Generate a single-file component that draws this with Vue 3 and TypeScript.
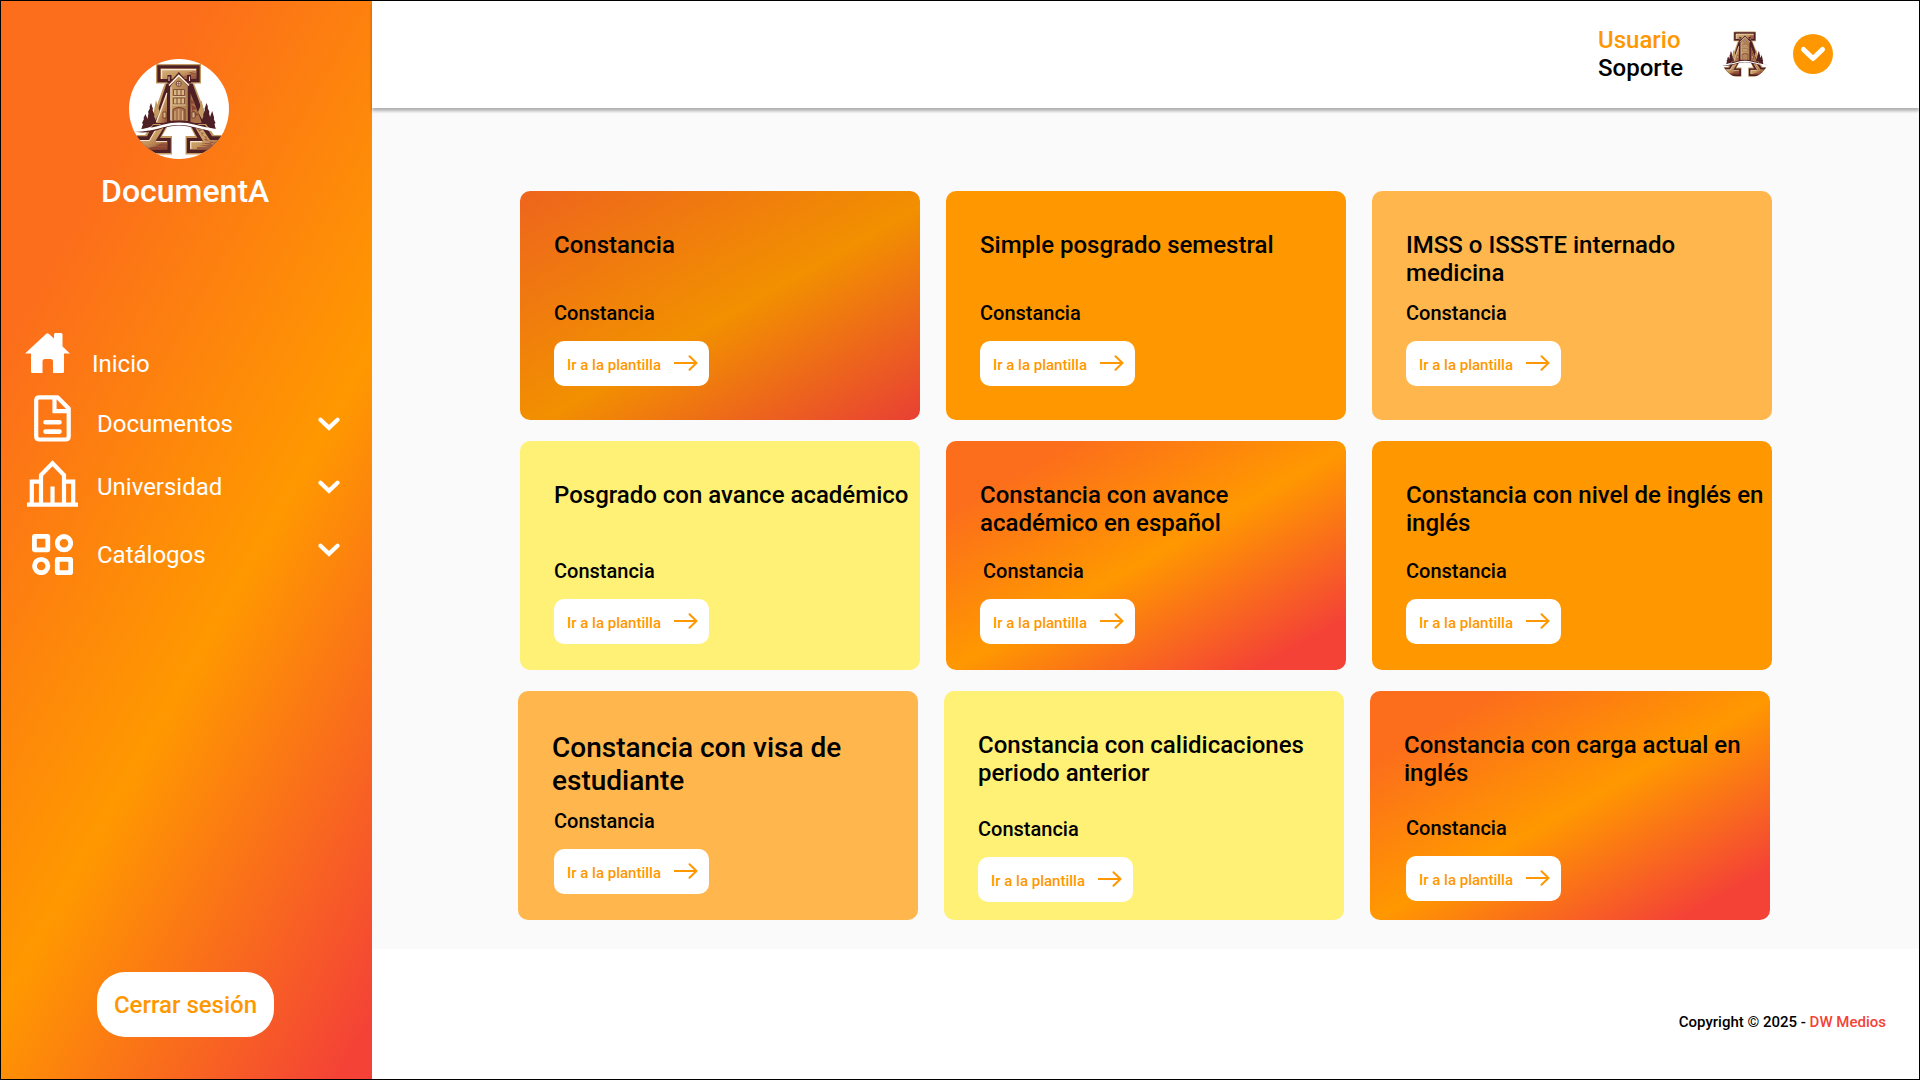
<script setup lang="ts">
interface NavItem {
  key: string
  label: string
  expandable: boolean
}

interface Template {
  title: string
  kind: string
  tone: string
  layout?: string
}

const navItems: NavItem[] = [
  { key: 'home', label: 'Inicio', expandable: false },
  { key: 'docs', label: 'Documentos', expandable: true },
  { key: 'campus', label: 'Universidad', expandable: true },
  { key: 'catalog', label: 'Catálogos', expandable: true },
]

const rows: Template[][] = [
  [
    { title: 'Constancia', kind: 'Constancia', tone: 'sunset-dim' },
    { title: 'Simple posgrado semestral', kind: 'Constancia', tone: 'orange' },
    { title: 'IMSS o ISSSTE internado\nmedicina', kind: 'Constancia', tone: 'peach' },
  ],
  [
    { title: 'Posgrado con avance académico', kind: 'Constancia', tone: 'yellow' },
    { title: 'Constancia con avance\nacadémico en español', kind: 'Constancia', tone: 'sunset', layout: 'kind-indent' },
    { title: 'Constancia con nivel de inglés en\ninglés', kind: 'Constancia', tone: 'orange' },
  ],
  [
    { title: 'Constancia con visa de\nestudiante', kind: 'Constancia', tone: 'peach', layout: 'large-title' },
    { title: 'Constancia con calidicaciones\nperiodo anterior', kind: 'Constancia', tone: 'yellow', layout: 'low' },
    { title: 'Constancia con carga actual en\ninglés', kind: 'Constancia', tone: 'sunset', layout: 'low-indent' },
  ],
]
</script>

<template>
  <div class="app">
    <svg class="defs" width="0" height="0" aria-hidden="true">
      <defs>
        <linearGradient id="bronze" x1="0" y1="0" x2="1" y2="1">
          <stop offset="0" stop-color="#dcb682" />
          <stop offset="0.55" stop-color="#c4965e" />
          <stop offset="1" stop-color="#8c4632" />
        </linearGradient>
        <linearGradient id="wall" x1="0" y1="0" x2="1" y2="0">
          <stop offset="0" stop-color="#c79c62" />
          <stop offset="1" stop-color="#b08050" />
        </linearGradient>
        <clipPath id="round"><circle cx="50" cy="50" r="50" /></clipPath>
        <symbol id="emblem" viewBox="0 0 100 100">
          <g clip-path="url(#round)">
            <!-- legs of the letter -->
            <path d="M36 24.500H65L81 66H21L34 29Z" fill="#c39a62" />
            <path d="M38 23H63L78.500 66H24Z" fill="#4e1f24" />
            <path d="M38 34V64H27Z" fill="url(#bronze)" />
            <path d="M61.500 34V64H73Z" fill="#a8714a" />
            <path d="M61.500 40L66 44 62 45 68 50 63 51 70 56 64 57" fill="#8c4632" />
            <path d="M38 34L27.500 63" stroke="#f7e6cd" stroke-width="1.400" />
            <path d="M34 53h3v6h-3zM63 53h3v6h-3z" fill="#d8b581" stroke="#6b3528" stroke-width=".8" />
            <!-- top serif -->
            <path d="M27 5H72V24.500H27Z" fill="#c39a62" />
            <path d="M28.300 6.300H70.700V23.200H28.300Z" fill="#4e1f24" />
            <path d="M31.500 9.500H67.500V20H31.500Z" fill="url(#bronze)" />
            <path d="M32.600 20V10.600H67" fill="none" stroke="#f7e6cd" stroke-width="1.200" />
            <path d="M67 12L58 14H67V15.500L55 17H67V19H52" fill="#9c5a40" />
            <!-- house -->
            <path d="M38.500 16H42.500V24H38.500ZM58 16H62V24H58Z" fill="#4e1f24" />
            <path d="M40 17.500V22M60.500 17.500V22" stroke="#f4e0c2" stroke-width="1" />
            <path d="M49.800 13L61 26V63H38.500V26Z" fill="#4e1f24" />
            <path d="M49.800 17.200L58.800 27V62H41.500V27Z" fill="url(#wall)" />
            <path d="M40 26.500L49.800 16.500L60 26.500" fill="none" stroke="#fff1dc" stroke-width="1.600" />
            <path d="M41.900 28V61" stroke="#f7e6cd" stroke-width="1" />
            <circle cx="49.700" cy="24.800" r="2.600" fill="#f4e0c2" stroke="#6b3528" stroke-width=".9" />
            <path d="M49.700 22.200V27.400M47.100 24.800H52.300" stroke="#6b3528" stroke-width=".7" />
            <path d="M44.500 30.500H55.500V36.500H44.500ZM44.500 39H55.500V45H44.500Z" fill="#d8b581" stroke="#7d4934" stroke-width=".9" />
            <path d="M48 30.500V36.500M52 30.500V36.500M48 39V45M52 39V45" stroke="#7d4934" stroke-width="1" />
            <path d="M43.500 37.600H56.500M43.500 46H56.500" stroke="#e6cfae" stroke-width=".9" />
            <path d="M44 62V50.500Q50 46.500 56 50.500V62Z" fill="#ab7550" stroke="#6b3528" stroke-width=".9" />
            <path d="M46 61V52M49.800 61V50M53.500 61V52" stroke="#dcb98c" stroke-width=".9" />
            <!-- trees -->
            <path d="M27 41L29 48L31 53L26 62H23Z M72.500 41L71 48L69 53L74 62H77Z" fill="#c39a62" />
            <path d="M22 44L24 50L23.500 51L25.500 56L25 57L27 62V66L12 71L14 65L13 64L15 60L14.500 59L16.500 55L18.500 60L19.500 54L19 53L21 49L20.500 48Z" fill="#4e1f24" />
            <path d="M77.500 44L75.500 50L76 51L74 56L74.500 57L72.500 62V66L87 71L85.500 65L86.500 64L84.800 60L85.200 59L83.200 52L81 58L80 54L80.500 53L78.600 49L79 48Z" fill="#4e1f24" />
            <!-- foot serifs -->
            <path d="M2 76H16L24 65H40L33 77H43V95.500H2Z" fill="#c39a62" />
            <path d="M2 77.300H18L24 66H38L31 79H41.800V94H2Z" fill="#4e1f24" />
            <path d="M4 81H20L27 69H34.500L26.500 82H38.500V90.500H10Z" fill="url(#bronze)" />
            <path d="M8 81.500H20.500L27 70.500M27 82.600H38" fill="none" stroke="#f7e6cd" stroke-width="1" />
            <path d="M38 84L26 85.500H38V87L22 88H38V90.500H14" fill="#8c4632" />
            <path d="M98 76H85L77 65H60L66 77H56.500V95.500H98Z" fill="#c39a62" />
            <path d="M98 77.300H83L76 66H61.500L68.500 79H57.800V94H98Z" fill="#4e1f24" />
            <path d="M96 81H81L73 69H66.500L74 82H61V90.500H90Z" fill="url(#bronze)" />
            <path d="M61.800 90V82.600H73" fill="none" stroke="#f7e6cd" stroke-width="1.100" />
            <path d="M68 70L73 71L70 73L75 74L72 76L78 78L75 81L88 84H72L82 86H70L80 88H68V90.500H88" fill="#9c5a40" />
            <!-- bridge -->
            <path d="M2 72Q26 70 34 64Q50 59.500 66 64Q76 70 98 72Q76 71.500 66 69Q50 64 34 69Q18 76 2 72Z" fill="#4e1f24" />
            <path d="M4 71.800Q22 71 34 67Q50 62.600 66 67Q80 71 97 72.500" fill="none" stroke="#fff" stroke-width="2.400" />
          </g>
        </symbol>
      </defs>
    </svg>

    <aside class="sidebar">
      <div class="brand">
        <div class="brand-logo"><svg width="100" height="100"><use href="#emblem" /></svg></div>
        <h1 class="brand-name">DocumentA</h1>
      </div>

      <nav class="nav">
        <a v-for="item in navItems" :key="item.key" class="nav-item" :class="item.key">
          <span class="nav-icon">
            <svg v-if="item.key === 'home'" width="45" height="40" viewBox="0 0 45 40" fill="#fff">
              <path d="M0 20.500 21 1Q22.500-.4 24 1L29 5.500V1.500Q29 0 30.500 0H36Q37.500 0 37.500 1.500V13.500L45 20.500H39V38.500Q39 40 37.500 40H28V28.500Q28 26 25.500 26H20Q17.500 26 17.500 28.500V40H7.500Q6 40 6 38.500V20.500Z" />
            </svg>
            <svg v-else-if="item.key === 'docs'" width="37" height="47" viewBox="0 0 37 47" fill="none" stroke="#fff" stroke-width="4.200">
              <path d="M5.500 2.300H23.500L34.700 13.500V41.200Q34.700 44.500 31.400 44.500H5.500Q2.200 44.500 2.200 41.200V5.600Q2.200 2.300 5.500 2.300Z" stroke-linejoin="round" />
              <path d="M20.500 3V16.200H34" />
              <path d="M11.500 27.300H25.500M11.500 36.600H25.500" stroke-width="4.600" stroke-linecap="round" />
            </svg>
            <svg v-else-if="item.key === 'campus'" width="51" height="47" viewBox="0 0 51 47" fill="none" stroke="#fff" stroke-width="4.200">
              <path d="M0 44.600H51M4.800 44V21.600H14M46.200 44V21.600H37M14 44V15L25.500 3.300 37 15V44M25.500 44V26.500" />
            </svg>
            <svg v-else width="41" height="41" viewBox="0 0 41 41" fill="none" stroke="#fff" stroke-width="4.800">
              <rect x="2.400" y="2.400" width="13.400" height="13.400" rx=".6" stroke-linejoin="round" />
              <circle cx="32" cy="9.200" r="6.700" />
              <circle cx="9.200" cy="32" r="6.700" />
              <rect x="25.300" y="25.300" width="13.400" height="13.400" rx=".6" stroke-linejoin="round" />
            </svg>
          </span>
          <span class="nav-label">{{ item.label }}</span>
          <svg v-if="item.expandable" class="nav-chevron" width="22" height="14" viewBox="0 0 22 14">
            <path d="M2.500 2.800 11 10.800 19.500 2.800" fill="none" stroke="#fff" stroke-width="4.200" stroke-linecap="round" />
          </svg>
        </a>
      </nav>

      <button class="logout" type="button">Cerrar sesión</button>
    </aside>

    <div class="main">
      <header class="topbar">
        <div class="user">
          <span class="user-name">Usuario</span>
          <span class="user-role">Soporte</span>
        </div>
        <svg class="avatar" width="50" height="50"><use href="#emblem" /></svg>
        <svg class="user-menu" width="40" height="40" viewBox="0 0 40 40">
          <circle cx="20" cy="20" r="20" fill="#ff9800" />
          <path d="M10.500 15.500 20 24.500 29.500 15.500" fill="none" stroke="#fff" stroke-width="5" stroke-linecap="round" stroke-linejoin="round" />
        </svg>
      </header>

      <main class="content">
        <div v-for="(row, i) in rows" :key="i" class="row" :class="`row-${i + 1}`">
          <article v-for="card in row" :key="card.title" class="card" :class="[card.tone, card.layout]">
            <h2 class="card-title">{{ card.title }}</h2>
            <p class="card-kind">{{ card.kind }}</p>
            <button class="card-link" type="button">
              <span>Ir a la plantilla</span>
              <svg width="25" height="16" viewBox="0 0 25 16" fill="none" stroke="#ff9800" stroke-width="2">
                <path d="M1 8H23" />
                <path d="M16.500 1.300 23.500 8 16.500 14.700" stroke-linecap="round" stroke-linejoin="round" />
              </svg>
            </button>
          </article>
        </div>
      </main>

      <footer class="footer">Copyright © 2025 -&nbsp;<span class="company">DW Medios</span></footer>
    </div>
  </div>
</template>

<style>
body {
  margin: 0;
}
</style>

<style scoped>
.app {
  display: flex;
  box-sizing: border-box;
  width: 1920px;
  height: 1080px;
  overflow: hidden;
  border: 1px solid #000;
  background: #fff;
  color: #000;
  font-family: Roboto, "Liberation Sans", sans-serif;
  font-weight: 500;
}

.defs {
  position: absolute;
}

h1,
h2,
p {
  margin: 0;
  font-weight: 500;
}

button {
  border: 0;
  padding: 0;
  background: #fff;
  color: #ff9800;
  font-family: inherit;
  font-weight: 500;
}

svg {
  display: block;
  flex: none;
}

.sidebar {
  display: flex;
  flex: none;
  flex-direction: column;
  width: 371px;
  background: linear-gradient(119.5deg, #fc6e1b 20.5%, #ff9800 58%, #f44336 96.3%);
}

.brand {
  padding: 58px 0 0 100px;
  height: 274px;
}

.brand-logo {
  width: 100px;
  height: 100px;
  margin-left: 28px;
  border-radius: 50%;
  background: #fff;
}

.brand-name {
  margin-top: 13px;
  color: #fff;
  font-size: 32px;
  line-height: 38px;
}

.nav {
  display: flex;
  flex-direction: column;
}

.nav-item {
  display: flex;
  align-items: flex-start;
  color: #fff;
  font-size: 24px;
  font-weight: 400;
  line-height: 28px;
}

.nav-icon {
  box-sizing: border-box;
  flex: none;
  width: 96px;
}

.nav-label {
  width: 221px;
}

.home {
  height: 62px;
}

.home .nav-icon {
  width: 91px;
  padding-left: 24px;
}

.home .nav-label {
  padding-top: 17px;
}

.docs {
  height: 65px;
}

.docs .nav-icon {
  padding-left: 33px;
}

.docs .nav-label {
  padding-top: 15px;
}

.docs .nav-chevron {
  margin-top: 22px;
}

.campus {
  height: 74px;
}

.campus .nav-icon {
  padding-left: 26px;
}

.campus .nav-label {
  padding-top: 13px;
}

.campus .nav-chevron {
  margin-top: 20px;
}

.catalog .nav-icon {
  padding-left: 31px;
}

.catalog .nav-label {
  padding-top: 7px;
}

.catalog .nav-chevron {
  margin-top: 9px;
}

.logout {
  width: 177px;
  height: 65px;
  margin: auto 0 42px 96px;
  border-radius: 28px;
  font-size: 24px;
}

.main {
  display: flex;
  flex: 1;
  flex-direction: column;
}

.topbar {
  display: flex;
  position: relative;
  align-items: center;
  justify-content: flex-end;
  box-sizing: border-box;
  height: 107px;
  padding: 0 86px 2px 0;
  background: #fff;
  box-shadow: 0 3px 3px rgba(0, 0, 0, 0.3);
}

.user {
  display: flex;
  flex-direction: column;
  width: 122px;
  font-size: 24px;
  line-height: 28px;
}

.user-name {
  color: #ff9800;
}

.avatar {
  margin-right: 23px;
}

.content {
  display: flex;
  flex-direction: column;
  gap: 21px;
  box-sizing: border-box;
  height: 841px;
  padding: 83px 0 0 148px;
  background: #fafafa;
}

.row {
  display: flex;
  gap: 26px;
}

.row-3 {
  margin-left: -2px;
}

.card {
  display: flex;
  flex-direction: column;
  align-items: flex-start;
  box-sizing: border-box;
  width: 400px;
  height: 229px;
  padding: 40px 0 0 34px;
  border-radius: 10px;
}

.card-title {
  height: 70px;
  font-size: 24px;
  line-height: 28px;
  white-space: pre;
}

.card-kind {
  height: 40px;
  font-size: 20px;
  line-height: 24px;
}

.card-link {
  display: flex;
  align-items: center;
  justify-content: space-between;
  width: 155px;
  height: 45px;
  padding: 0 11px 0 13px;
  border-radius: 10px;
  font-size: 15px;
  line-height: 18px;
}

.card-link span {
  padding-top: 2px;
}

.card-link svg {
  margin-bottom: 1px;
}

.row-2 .card-title,
.row-3 .card-title {
  height: 78px;
}

.kind-indent .card-kind {
  margin-left: 3px;
}

.large-title .card-title {
  font-size: 28px;
  line-height: 33px;
}

.large-title .card-kind,
.large-title .card-link,
.low-indent .card-kind,
.low-indent .card-link {
  margin-left: 2px;
}

.row-3 .low .card-title {
  height: 86px;
}

.row-3 .low-indent .card-title {
  height: 85px;
}

.orange {
  background: #ff9800;
}

.peach {
  background: #ffb74d;
}

.yellow {
  background: #fff176;
}

.sunset {
  background: linear-gradient(150.6deg, #fc6e1b 16%, #ff9800 51%, #f44336 88.5%);
}

.sunset-dim {
  background: linear-gradient(150.6deg, #ee661c 2%, #f29000 53%, #e84034 100%);
}

.footer {
  display: flex;
  flex: 1;
  align-items: center;
  justify-content: flex-end;
  padding: 16px 33px 0 0;
  font-size: 15px;
}

.company {
  color: #f44336;
}
</style>
